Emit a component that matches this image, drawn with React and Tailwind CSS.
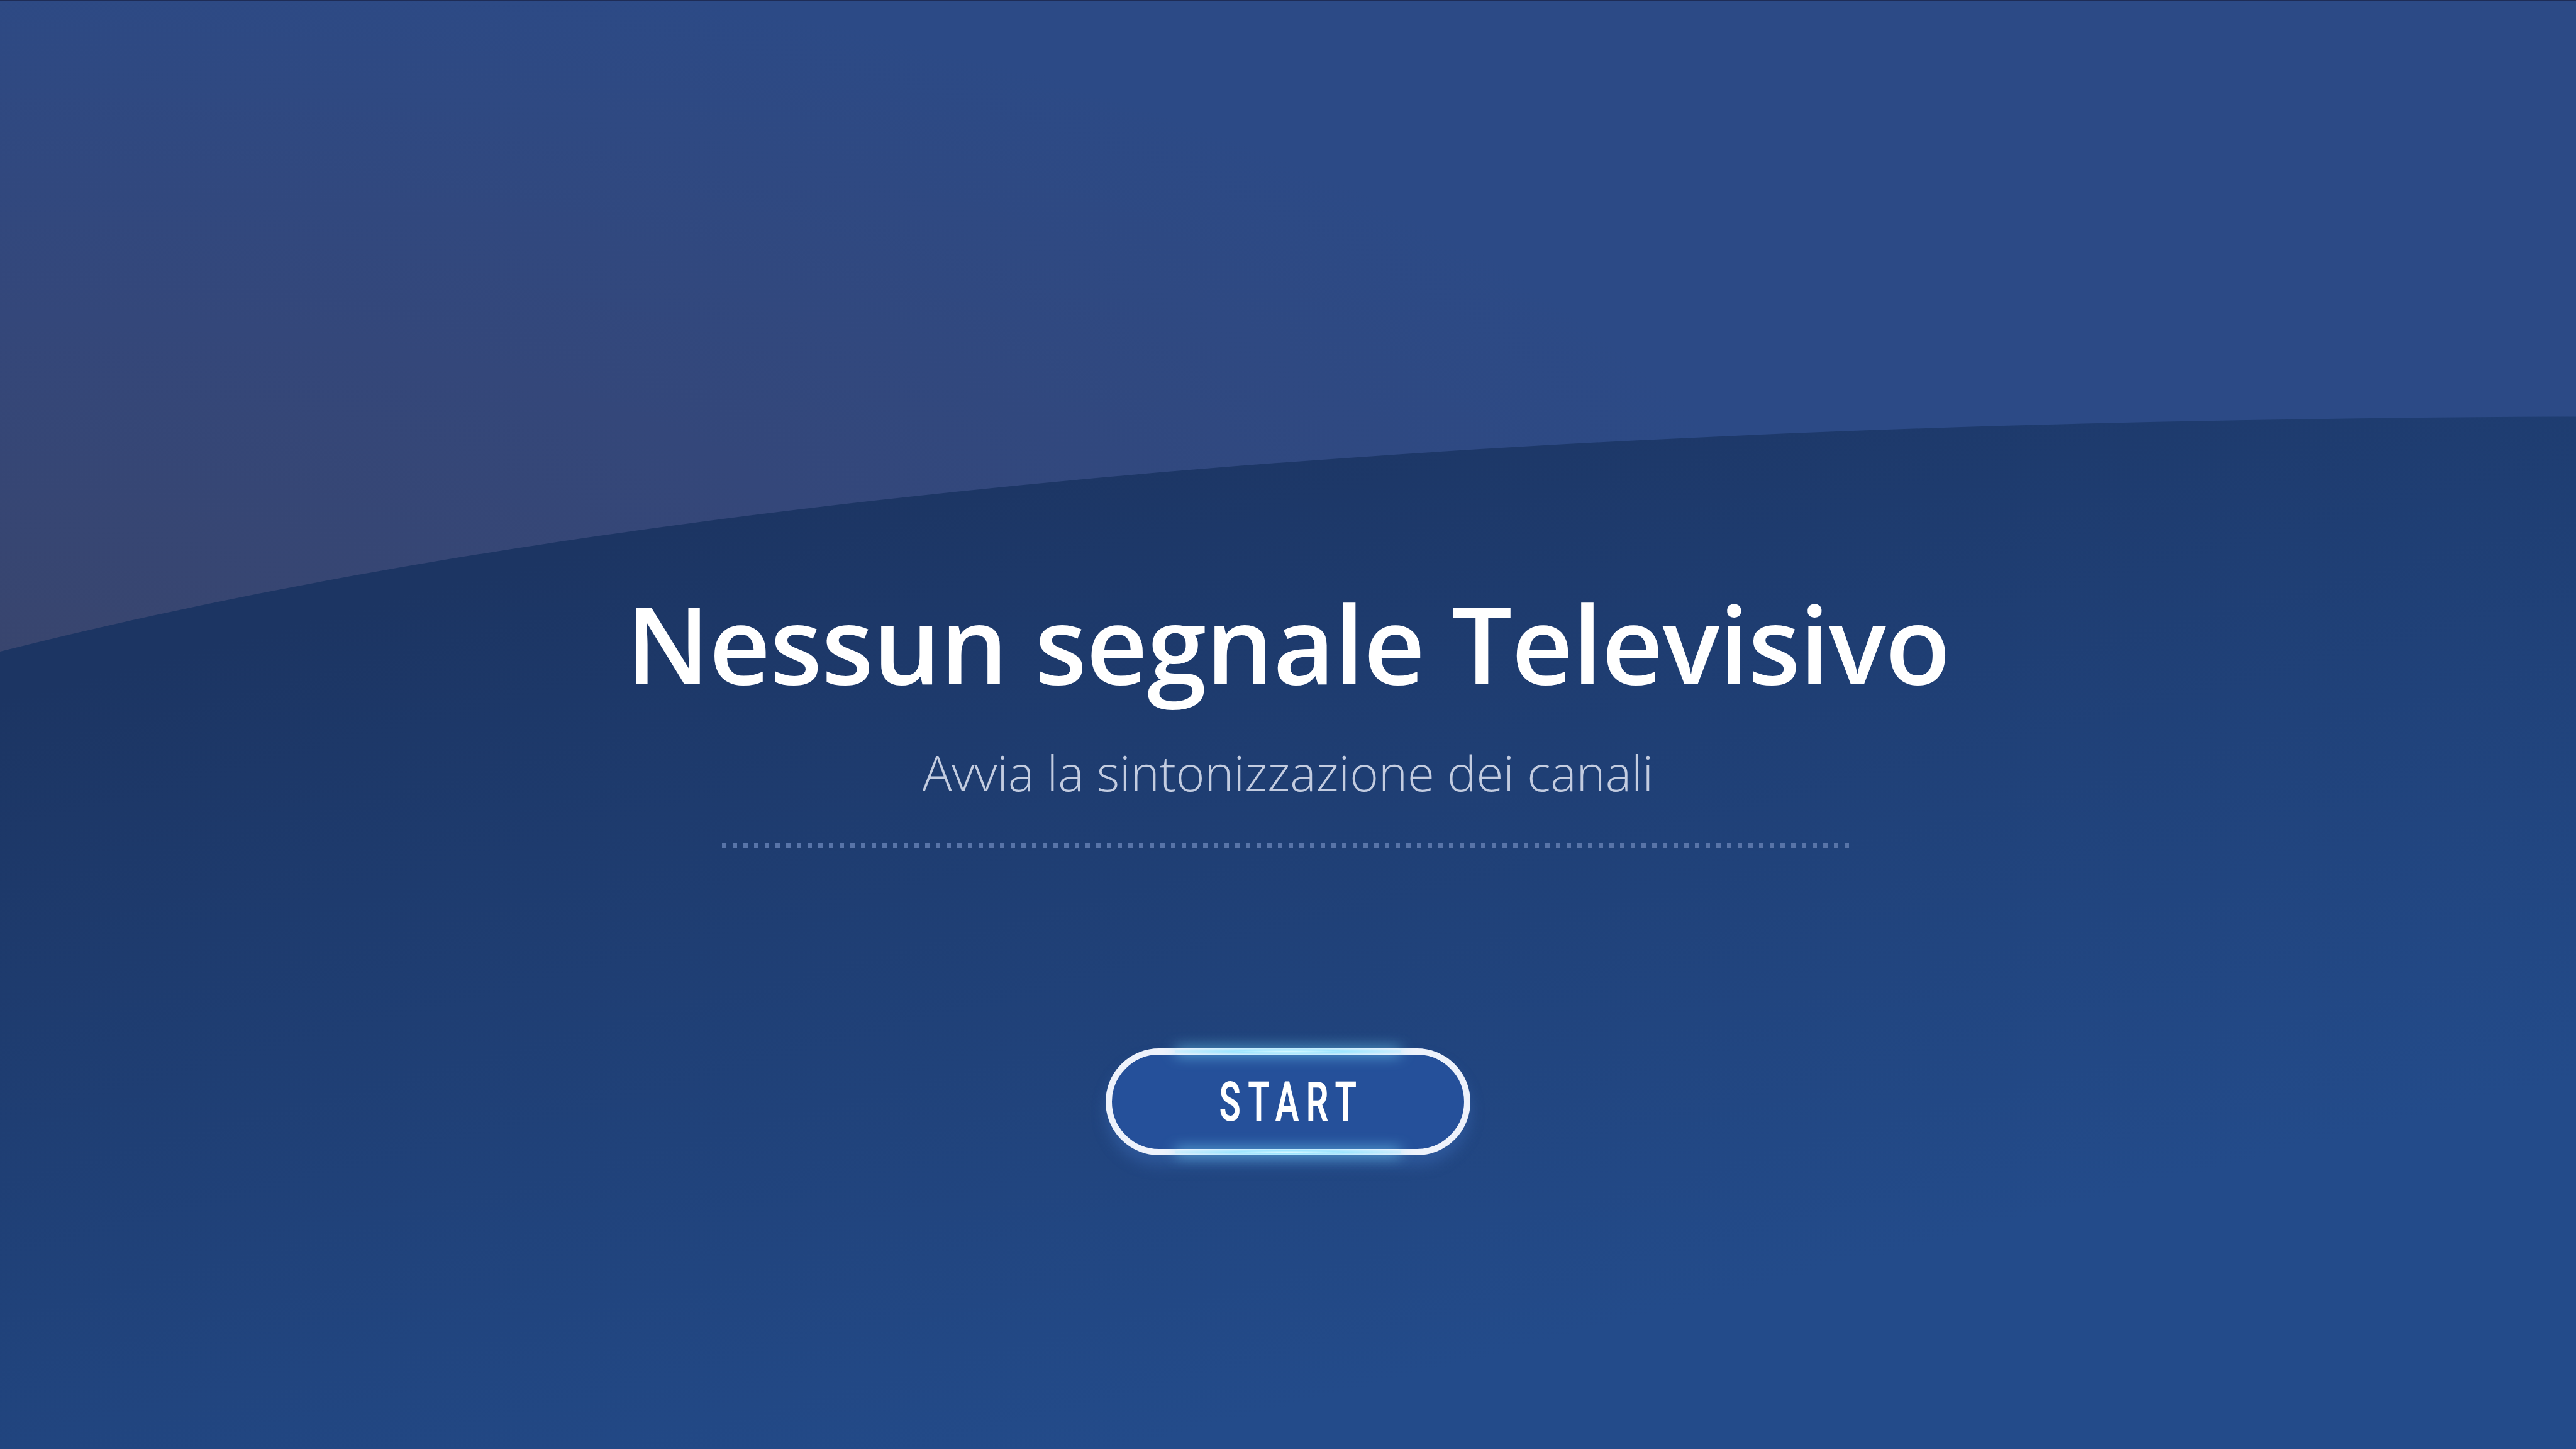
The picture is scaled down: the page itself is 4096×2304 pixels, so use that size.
import React from "react";

const Backdrop = () => (
  <svg
    className="absolute inset-0 w-full h-full"
    viewBox="0 0 4096 2304"
    preserveAspectRatio="none"
  >
    <defs>
      <linearGradient id="lower" gradientUnits="userSpaceOnUse" x1="1400" y1="750" x2="1800" y2="2304">
        <stop offset="0" stopColor="#1c3563" />
        <stop offset="1" stopColor="#234b8a" />
      </linearGradient>
      <radialGradient
        id="upper"
        gradientUnits="userSpaceOnUse"
        cx="0"
        cy="1100"
        r="1000"
        gradientTransform="translate(0 1100) scale(2.9 1.2) translate(0 -1100)"
      >
        <stop offset="0" stopColor="#39456d" />
        <stop offset="0.5" stopColor="#34477a" />
        <stop offset="1" stopColor="#2c4a86" />
      </radialGradient>
    </defs>
    <rect x="0" y="0" width="4096" height="2304" fill="url(#lower)" />
    <path d="M0 0 H4096 V661 C2200 668 900 807 0 1035 Z" fill="url(#upper)" />
  </svg>
);

const StartButton = () => (
  <button className="relative w-[580px] h-[170px] rounded-full border-[10px] border-[#eef2fb] bg-[#25509a] shadow-[0_16px_22px_rgba(70,120,200,0.35)] flex items-center justify-center">
    {/* glow on the top and bottom of the ring */}
    <span className="absolute left-[100px] right-[100px] top-[-10px] h-[10px] rounded-full bg-[radial-gradient(ellipse_at_center,#e0fbff_0%,#9fe6ff_35%,rgba(210,230,255,0)_100%)] shadow-[0_0_22px_rgba(120,220,255,0.9)]" />
    <span className="absolute left-[100px] right-[100px] bottom-[-10px] h-[10px] rounded-full bg-[radial-gradient(ellipse_at_center,#e0fbff_0%,#9fe6ff_35%,rgba(210,230,255,0)_100%)] shadow-[0_0_22px_rgba(120,220,255,0.9)]" />
    <span className="inline-block scale-x-[0.64] text-white text-[88px] leading-none font-semibold tracking-[18px] pl-[18px] font-['Roboto',sans-serif]">
      START
    </span>
  </button>
);

export default function App() {
  return (
    <div className="relative w-[4096px] h-[2304px] overflow-hidden border-t-2 border-[#1e2c56] font-['Open_Sans',sans-serif]">
      <Backdrop />
      <div className="relative flex flex-col items-center pt-[935px]">
        <h1 className="text-[170px] leading-none font-semibold text-white tracking-[-1px]">
          Nessun segnale Televisivo
        </h1>
        <p className="mt-[82px] text-[78px] leading-none font-light text-[#c3cce0]">
          Avvia la sintonizzazione dei canali
        </p>
        <div className="mt-[73px] w-[1801px] h-[8px] bg-[repeating-linear-gradient(90deg,#5874a8_0_7px,transparent_7px_17px)]" />
        <div className="mt-[319px]">
          <StartButton />
        </div>
      </div>
    </div>
  );
}
